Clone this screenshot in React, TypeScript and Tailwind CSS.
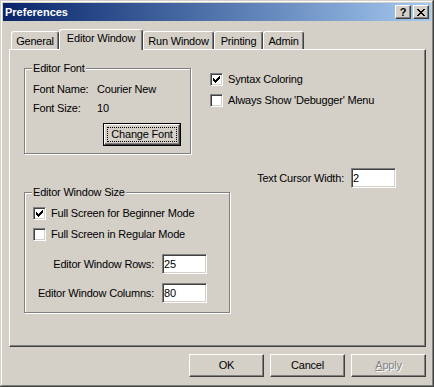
const raised =
  'border-t border-l border-t-white border-l-white border-r border-b border-r-[#404040] border-b-[#404040] shadow-[inset_-1px_-1px_#808080] bg-[#d4d0c8]';
const sunken =
  'border-t border-l border-t-[#808080] border-l-[#808080] border-r border-b border-r-white border-b-white shadow-[inset_1px_1px_#404040,inset_-1px_-1px_#d4d0c8] bg-white';

function Check({ checked }: { checked?: boolean }) {
  return (
    <div className={`w-[13px] h-[13px] shrink-0 flex items-center justify-center ${sunken}`}>
      {checked && (
        <svg width="7" height="7" viewBox="0 0 7 7" shapeRendering="crispEdges">
          <path
            d="M0 2h1v3H0z M1 3h1v3H1z M2 4h1v3H2z M3 3h1v3H3z M4 2h1v3H4z M5 1h1v3H5z M6 0h1v3H6z"
            fill="#000"
          />
        </svg>
      )}
    </div>
  );
}

function CheckRow({ label, checked }: { label: string; checked?: boolean }) {
  return (
    <div className="h-[13px] flex items-center gap-[5px] whitespace-nowrap">
      <Check checked={checked} />
      <span>{label}</span>
    </div>
  );
}

function Field({ value }: { value: string }) {
  return (
    <div className={`w-[45px] h-[20px] shrink-0 flex items-center pl-[1px] ${sunken}`}>{value}</div>
  );
}

function Tab({ label, width, active }: { label: string; width: string; active?: boolean }) {
  return (
    <div
      className={`${width} ${
        active ? 'h-[21px] -mb-[1px] relative z-10 pb-[3px]' : 'h-[18px] pt-[1px]'
      } flex items-center justify-center rounded-t-[3px] border-t border-l border-t-white border-l-white border-r border-r-[#404040] shadow-[inset_-1px_0_#808080] bg-[#d4d0c8] whitespace-nowrap`}
    >
      {label}
    </div>
  );
}

function Button({ children, disabled }: { children: React.ReactNode; disabled?: boolean }) {
  return (
    <div
      className={`w-[75px] h-[23px] flex items-center justify-center ${raised} ${
        disabled ? 'text-[#808080] [text-shadow:1px_1px_0_#fff]' : ''
      }`}
    >
      {children}
    </div>
  );
}

export default function App() {
  return (
    <div className="w-[434px] h-[387px] bg-[#d4d0c8] p-[3px] flex flex-col overflow-hidden text-[11px] leading-[13px] tracking-[-0.2px] text-black font-['Liberation_Sans',Arial,sans-serif] shadow-[inset_-1px_-1px_#404040,inset_1px_1px_#d4d0c8,inset_-2px_-2px_#808080,inset_2px_2px_#ffffff]">
      {/* title bar */}
      <div className="h-[18px] shrink-0 flex items-center bg-linear-to-r from-[#0a246a] to-[#a6caf0] pl-[2px] pr-[2px]">
        <span className="flex-1 font-bold text-white text-[11px] tracking-normal">Preferences</span>
        <div className={`w-[16px] h-[14px] flex items-center justify-center font-bold text-[11px] leading-none ${raised}`}>
          ?
        </div>
        <div className={`w-[16px] h-[14px] ml-[2px] flex items-center justify-center ${raised}`}>
          <svg width="8" height="7" viewBox="0 0 8 7" shapeRendering="crispEdges">
            <path
              d="M0 0h2v1H0z M6 0h2v1H6z M1 1h2v1H1z M5 1h2v1H5z M2 2h4v1H2z M3 3h2v1H3z M2 4h4v1H2z M1 5h2v1H1z M5 5h2v1H5z M0 6h2v1H0z M6 6h2v1H6z"
              fill="#000"
            />
          </svg>
        </div>
      </div>

      {/* tabs */}
      <div className="mt-[8px] h-[20px] shrink-0 flex items-end pl-[8px]">
        <Tab label="General" width="w-[48px]" />
        <Tab label="Editor Window" width="w-[84px]" active />
        <Tab label="Run Window" width="w-[71px]" />
        <Tab label="Printing" width="w-[49px]" />
        <Tab label="Admin" width="w-[41px]" />
      </div>

      {/* panel */}
      <div className="ml-[6px] w-[417px] h-[298px] shrink-0 border-t border-l border-t-white border-l-white border-r border-b border-r-[#404040] border-b-[#404040] shadow-[inset_-1px_-1px_#808080] pl-[14px] pt-[18px] flex flex-col">
        <div className="flex">
          <div className="relative w-[167px] h-[86px] border border-[#808080] shadow-[1px_1px_0_#fff,inset_1px_1px_0_#fff] pl-[8px] pt-[11px] flex flex-col">
            <span className="absolute -top-[7px] left-[7px] px-[1px] bg-[#d4d0c8]">Editor Font</span>
            <div className="h-[19px] flex items-center">
              <span className="w-[64px]">Font Name:</span>
              <span>Courier New</span>
            </div>
            <div className="h-[19px] flex items-center">
              <span className="w-[64px]">Font Size:</span>
              <span>10</span>
            </div>
            <div className="mt-[5px] ml-[70px] w-[78px] h-[23px] border border-black">
              <div className={`w-full h-full p-[2px] ${raised}`}>
                <div className="w-full h-full border border-dotted border-black flex items-center justify-center">
                  Change Font
                </div>
              </div>
            </div>
          </div>
          <div className="ml-[19px] mt-[5px] flex flex-col gap-[8px]">
            <CheckRow label="Syntax Coloring" checked />
            <CheckRow label="Always Show 'Debugger' Menu" />
          </div>
        </div>

        <div className="mt-[14px] w-[372px] flex justify-end items-center gap-[7px]">
          <span>Text Cursor Width:</span>
          <Field value="2" />
        </div>

        <div className="mt-[4px] relative w-[206px] h-[121px] border border-[#808080] shadow-[1px_1px_0_#fff,inset_1px_1px_0_#fff] pl-[8px] pt-[14px] flex flex-col">
          <span className="absolute -top-[7px] left-[7px] px-[1px] bg-[#d4d0c8]">Editor Window Size</span>
          <div className="flex flex-col gap-[8px]">
            <CheckRow label="Full Screen for Beginner Mode" checked />
            <CheckRow label="Full Screen in Regular Mode" />
          </div>
          <div className="mt-[13px] flex flex-col gap-[9px]">
            <div className="flex items-center">
              <span className="w-[121px] text-right">Editor Window Rows:</span>
              <div className="ml-[8px]">
                <Field value="25" />
              </div>
            </div>
            <div className="flex items-center">
              <span className="w-[121px] text-right whitespace-nowrap">Editor Window Columns:</span>
              <div className="ml-[8px]">
                <Field value="80" />
              </div>
            </div>
          </div>
        </div>
      </div>

      {/* buttons */}
      <div className="mt-[7px] flex justify-end gap-[6px] pr-[5px]">
        <Button>OK</Button>
        <Button>Cancel</Button>
        <Button disabled>
          <span>
            <span className="underline">A</span>pply
          </span>
        </Button>
      </div>
    </div>
  );
}
